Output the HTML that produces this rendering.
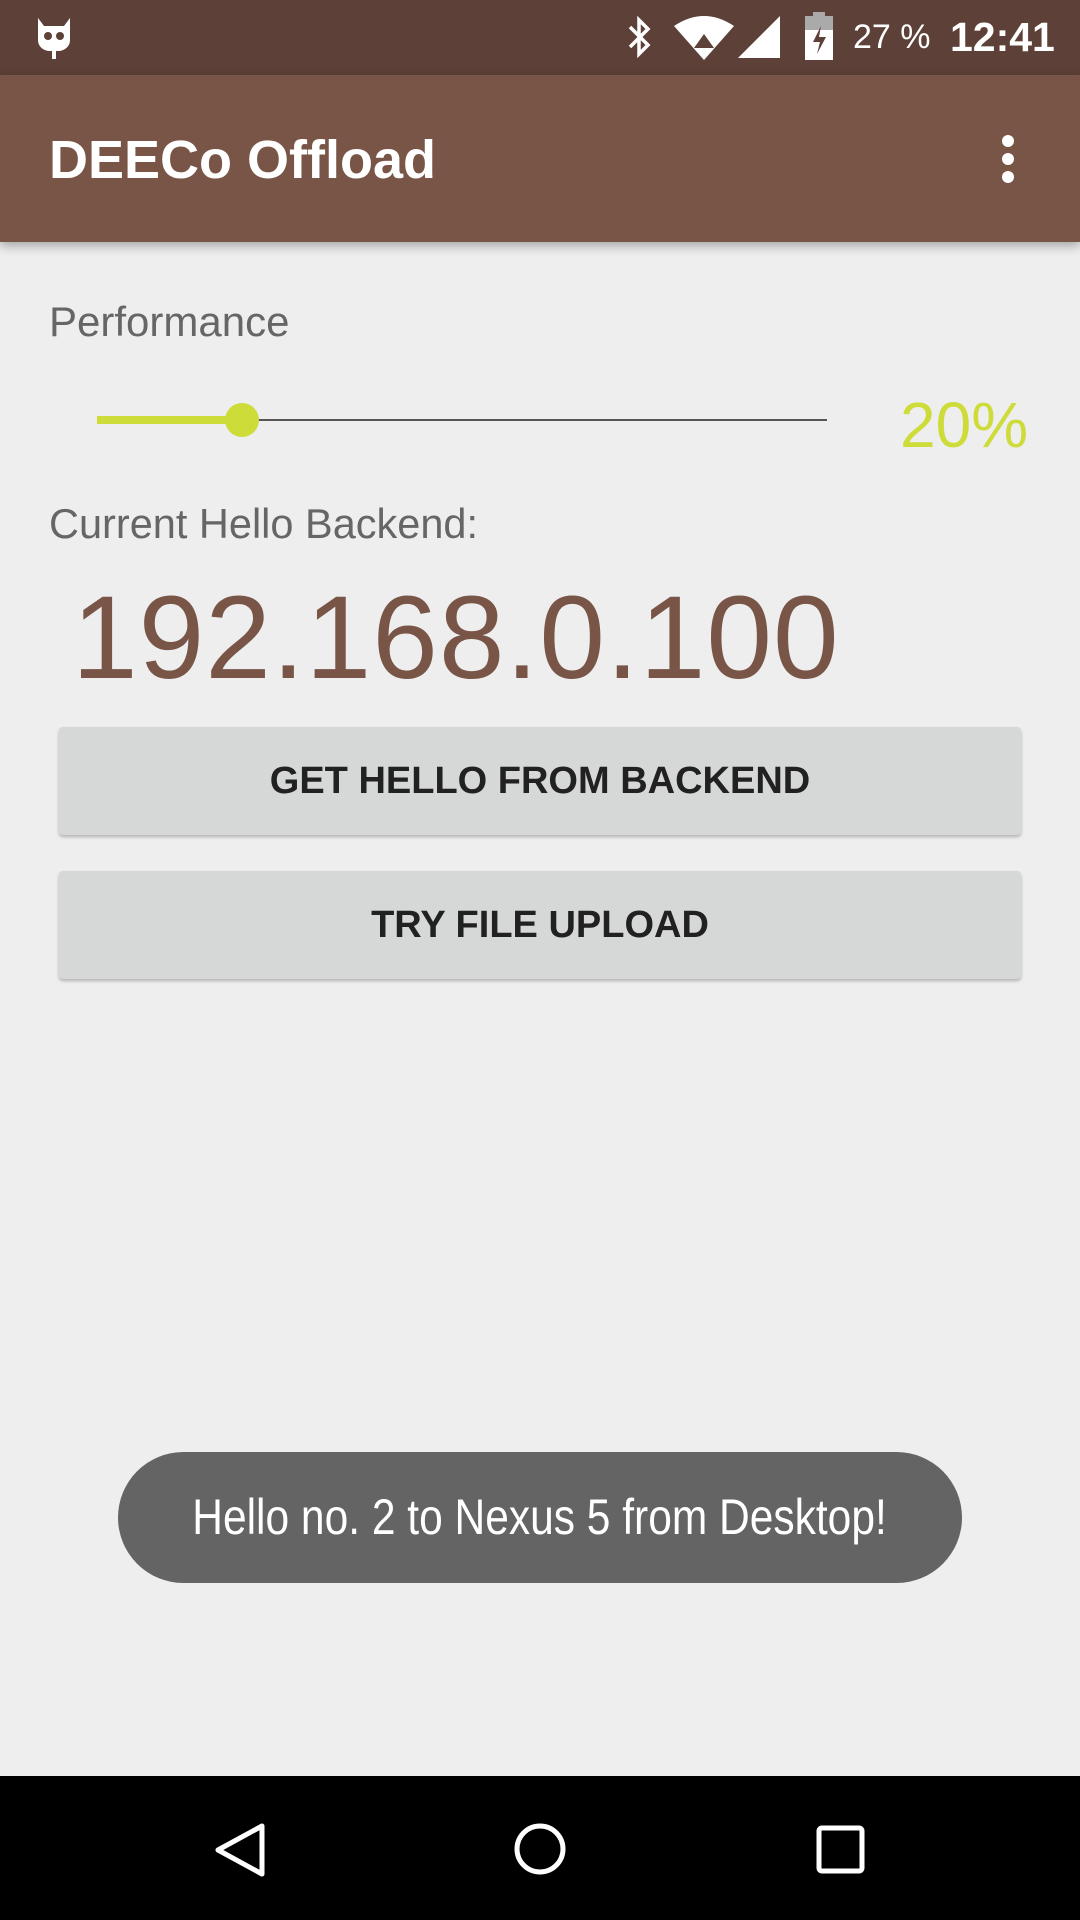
<!DOCTYPE html>
<html><head><meta charset="utf-8"><style>
*{margin:0;padding:0;box-sizing:border-box}
body{width:1080px;height:1920px;background:#eeeeee;font-family:"Liberation Sans",sans-serif;position:relative;overflow:hidden}
.abs{position:absolute}
#status{left:0;top:0;width:1080px;height:75px;background:#5d4037}
#bar{left:0;top:75px;width:1080px;height:167px;background:#795548;box-shadow:0 4px 10px rgba(0,0,0,.3)}
.btn{left:59px;width:962px;height:108px;background:#d6d7d7;border-radius:4px;box-shadow:0 2px 3px rgba(0,0,0,.25);color:#212121;font-weight:bold;font-size:38px;text-align:center;line-height:108px}
#nav{left:0;top:1776px;width:1080px;height:144px;background:#000}
</style></head><body>
<div id="status" class="abs">
 <svg class="abs" style="left:34px;top:16px" width="40" height="44" viewBox="0 0 40 44"><path d="M4 2l6 8h20l6-8v22c0 7-6 11-12 11h-8C10 35 4 31 4 24z" fill="#fff"/><circle cx="14" cy="20" r="4" fill="#5d4037"/><circle cx="26" cy="20" r="4" fill="#5d4037"/><rect x="18" y="34" width="4" height="9" fill="#fff"/></svg>
 <svg class="abs" style="left:624px;top:16px" width="30" height="42" viewBox="0 0 30 42"><path d="M6 11l18 18-9 9V4l9 9L6 31" stroke="#fff" stroke-width="3.5" fill="none"/></svg>
 <svg class="abs" style="left:672px;top:16px" width="64" height="44" viewBox="0 0 64 44"><path d="M2 10Q32-10 62 10L32 44z" fill="#fff"/><path d="M22 32l10-14 10 14z" fill="#5d4037"/></svg>
 <svg class="abs" style="left:738px;top:16px" width="42" height="42"><path d="M0 42L42 0v42z" fill="#fff"/></svg>
 <svg class="abs" style="left:805px;top:12px" width="28" height="48"><rect x="8" y="0" width="12" height="5" fill="#aaa"/><rect x="0" y="4" width="28" height="44" fill="#fff"/><rect x="0" y="4" width="28" height="14" fill="#aaa"/><path d="M16 14l-8 16h7l-3 12 9-17h-7z" fill="#5d4037"/></svg>
 <div class="abs" style="left:853px;top:18px;color:#fff;font-size:34px">27 %</div>
 <div class="abs" style="left:950px;top:14px;color:#fff;font-size:41px;font-weight:bold">12:41</div>
</div>
<div id="bar" class="abs">
 <div class="abs" style="left:49px;top:54px;color:#fff;font-size:54px;font-weight:bold">DEECo Offload</div>
 <svg class="abs" style="left:998px;top:58px" width="20" height="52"><circle cx="10" cy="8" r="6" fill="#fff"/><circle cx="10" cy="26" r="6" fill="#fff"/><circle cx="10" cy="44" r="6" fill="#fff"/></svg>
</div>
<div class="abs" style="left:49px;top:298px;color:#666;font-size:42px">Performance</div>
<div class="abs" style="left:97px;top:419px;width:730px;height:2px;background:#555"></div>
<div class="abs" style="left:97px;top:416px;width:145px;height:8px;background:#cddc39"></div>
<div class="abs" style="left:225px;top:403px;width:34px;height:34px;border-radius:50%;background:#cddc39"></div>
<div class="abs" style="left:900px;top:388px;color:#cddc39;font-size:64px">20%</div>
<div class="abs" style="left:49px;top:500px;color:#666;font-size:41.5px">Current Hello Backend:</div>
<div class="abs" style="left:72px;top:570px;color:#795548;font-size:118px;letter-spacing:1px">192.168.0.100</div>
<div class="abs btn" style="top:727px">GET HELLO FROM BACKEND</div>
<div class="abs btn" style="top:871px">TRY FILE UPLOAD</div>
<div class="abs" style="left:118px;top:1452px;width:844px;height:131px;border-radius:66px;background:#646464;color:#fff;font-size:50px;text-align:center;line-height:131px"><span style="display:inline-block;transform:scaleX(0.85);white-space:nowrap">Hello no. 2 to Nexus 5 from Desktop!</span></div>
<div id="nav" class="abs">
 <svg class="abs" style="left:212px;top:46px" width="56" height="56"><path d="M50 4L6 28l44 24z" stroke="#fff" stroke-width="5" fill="none" stroke-linejoin="round"/></svg>
 <svg class="abs" style="left:512px;top:45px" width="56" height="56"><circle cx="28" cy="28" r="23" stroke="#fff" stroke-width="5" fill="none"/></svg>
 <svg class="abs" style="left:815px;top:48px" width="52" height="52"><rect x="4" y="4" width="43" height="43" rx="3" stroke="#fff" stroke-width="5" fill="none"/></svg>
</div>
</body></html>
